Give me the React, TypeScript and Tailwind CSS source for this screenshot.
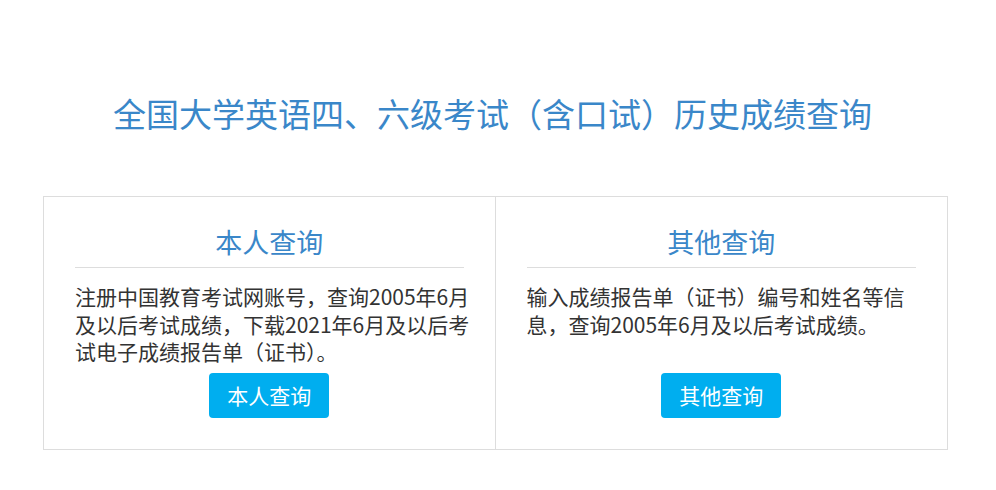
import React from 'react';

const font = { fontFamily: '"Microsoft YaHei", "Noto Sans CJK SC", sans-serif' };

interface CardProps {
  title: string;
  lines: string[];
  button: string;
  last?: boolean;
}

const Card = ({ title, lines, button, last }: CardProps) => (
  <div className={`w-1/2 min-w-0 flex flex-col pl-[31px] pr-[31px] pt-[27px] pb-[31px] ${last ? '' : 'border-r border-[#dddddd]'}`}>
    <h2 className="text-center text-[27px] leading-[36px] text-[#3a87c9] font-normal">{title}</h2>
    <div className="mt-[7px] border-t border-[#dddddd]" />
    <div className="mt-[15px] h-[83px] text-[21px] leading-[27.5px] text-[#333333] whitespace-nowrap">
      {lines.map((l, i) => (
        <div key={i}>{l}</div>
      ))}
    </div>
    <div className="mt-[7px] flex justify-center">
      <button className="w-[120px] h-[45px] rounded-[4px] bg-[#00aeef] text-white text-[21px] leading-none">
        {button}
      </button>
    </div>
  </div>
);

export default function App() {
  return (
    <div className="w-[996px] h-[490px] bg-white" style={font}>
      <div className="w-[905px] ml-[43px] pt-[93px] pr-[6px] text-center text-[33px] leading-[40px] text-[#3a87c9]">
        全国大学英语四、六级考试（含口试）历史成绩查询
      </div>
      <div className="mt-[63px] w-[905px] ml-[43px] flex border border-[#dddddd]">
        <Card
          title="本人查询"
          lines={[
            '注册中国教育考试网账号，查询2005年6月',
            '及以后考试成绩，下载2021年6月及以后考',
            '试电子成绩报告单（证书）。',
          ]}
          button="本人查询"
        />
        <Card
          title="其他查询"
          lines={['输入成绩报告单（证书）编号和姓名等信', '息，查询2005年6月及以后考试成绩。']}
          button="其他查询"
          last
        />
      </div>
    </div>
  );
}
